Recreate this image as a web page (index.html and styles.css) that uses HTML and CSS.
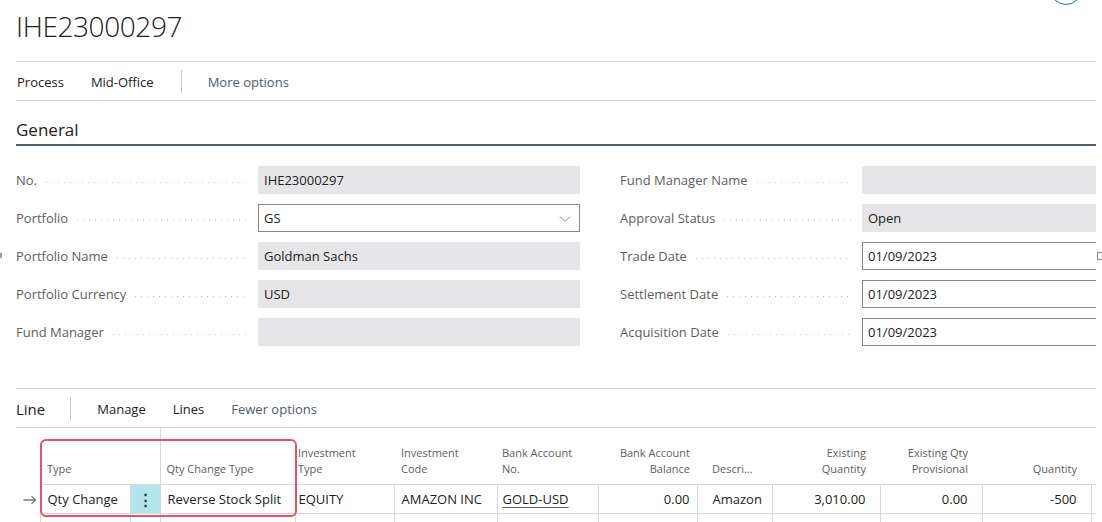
FILE: index.html
```html
<!DOCTYPE html>
<html>
<head>
<meta charset="utf-8">
<link rel="stylesheet" href="styles.css">
</head>
<body>
<div class="page">
  <div class="avatar"></div>
  <div class="edge-mark"></div>
  <div class="cal-icon"></div>
  <div class="content">
    <h1 class="title">IHE23000297</h1>
    <nav class="actionbar top-actions">
      <span class="act">Process</span>
      <span class="act">Mid-Office</span>
      <span class="sep"></span>
      <span class="act more">More options</span>
    </nav>

    <section class="general">
      <h2 class="section-title">General</h2>
      <div class="form">
        <div class="col">
          <div class="field"><div class="lbl"><span>No.</span><i class="dots"></i></div><div class="input ro">IHE23000297</div></div>
          <div class="field"><div class="lbl"><span>Portfolio</span><i class="dots"></i></div><div class="input edit select">GS<svg class="chev" width="12" height="8" viewBox="0 0 12 8"><path d="M1 1.5 L6 6.5 L11 1.5" fill="none" stroke="#8a8886" stroke-width="1"/></svg></div></div>
          <div class="field"><div class="lbl"><span>Portfolio Name</span><i class="dots"></i></div><div class="input ro">Goldman Sachs</div></div>
          <div class="field"><div class="lbl"><span>Portfolio Currency</span><i class="dots"></i></div><div class="input ro">USD</div></div>
          <div class="field"><div class="lbl"><span>Fund Manager</span><i class="dots"></i></div><div class="input ro"></div></div>
        </div>
        <div class="col">
          <div class="field"><div class="lbl"><span>Fund Manager Name</span><i class="dots"></i></div><div class="input ro"></div></div>
          <div class="field"><div class="lbl"><span>Approval Status</span><i class="dots"></i></div><div class="input ro">Open</div></div>
          <div class="field"><div class="lbl"><span>Trade Date</span><i class="dots"></i></div><div class="input edit">01/09/2023</div></div>
          <div class="field"><div class="lbl"><span>Settlement Date</span><i class="dots"></i></div><div class="input edit">01/09/2023</div></div>
          <div class="field"><div class="lbl"><span>Acquisition Date</span><i class="dots"></i></div><div class="input edit">01/09/2023</div></div>
        </div>
      </div>
    </section>

    <section class="lines">
      <nav class="actionbar line-actions">
        <span class="line-title">Line</span>
        <span class="sep"></span>
        <span class="act">Manage</span>
        <span class="act">Lines</span>
        <span class="act more">Fewer options</span>
      </nav>
      <div class="grid-wrap">
        <table class="grid">
          <colgroup>
            <col class="c-arrow"><col class="c-type"><col class="c-dots"><col class="c-qct"><col class="c-itype"><col class="c-icode"><col class="c-bank"><col class="c-bal"><col class="c-desc"><col class="c-exq"><col class="c-prov"><col class="c-qty"><col class="c-rest">
          </colgroup>
          <thead>
            <tr>
              <th class="h-arrow"></th>
              <th colspan="2">Type</th>
              <th class="freeze">Qty Change Type</th>
              <th class="tight">Investment<br>Type</th>
              <th>Investment<br>Code</th>
              <th class="bank">Bank Account<br>No.</th>
              <th class="num nb">Bank Account<br>Balance</th>
              <th class="desc">Descri...</th>
              <th class="num">Existing<br>Quantity</th>
              <th class="num">Existing Qty<br>Provisional</th>
              <th class="num">Quantity</th>
              <th></th>
            </tr>
          </thead>
          <tbody>
            <tr class="row">
              <td class="arrow"><svg width="14" height="10" viewBox="0 0 14 10"><path d="M0.5 5 H12.5 M8.5 1 L12.5 5 L8.5 9" fill="none" stroke="#333" stroke-width="1"/></svg></td>
              <td>Qty Change</td>
              <td class="dotscell">⋮</td>
              <td>Reverse Stock Split</td>
              <td class="tight">EQUITY</td>
              <td>AMAZON INC</td>
              <td class="bank"><span class="lookup">GOLD-USD</span></td>
              <td class="num nb">0.00</td>
              <td class="desc">Amazon</td>
              <td class="num">3,010.00</td>
              <td class="num">0.00</td>
              <td class="num">-500</td>
              <td></td>
            </tr>
            <tr class="row">
              <td class="arrow"></td>
              <td></td><td></td><td></td><td></td><td></td><td></td><td></td><td></td><td></td><td></td><td></td><td></td>
            </tr>
          </tbody>
        </table>
        <div class="highlight"></div>
      </div>
    </section>
  </div>
</div>
</body>
</html>
```

FILE: styles.css
```css
* { box-sizing: border-box; }
html, body { margin: 0; padding: 0; background: #fff; overflow: hidden; }
body {
  font-family: "Open Sans", "Segoe UI", sans-serif;
  font-size: 13px;
  color: #212121;
}
.page { position: relative; width: 1102px; height: 522px; overflow: hidden; }
.content { margin-left: 16px; width: 1080px; height: 522px; overflow: hidden; }

.avatar {
  position: absolute; left: 1050px; top: -27px;
  width: 32px; height: 32px; border-radius: 50%;
  border: 1.5px solid #00858a;
}
.edge-mark {
  position: absolute; left: 0; top: 253px; width: 2px; height: 5px; background: #9a9a9a;
}
.cal-icon {
  position: absolute; left: 1097px; top: 252px; width: 8px; height: 8px;
  border: 1px solid #8a8886;
}

.title {
  margin: 0; height: 61px; padding-top: 7px;
  font-size: 28px; font-weight: 300; line-height: 38px; color: #212121;
  letter-spacing: -0.4px;
}

.actionbar {
  display: flex; align-items: center;
  border-top: 1px solid #d8d8d8; border-bottom: 1px solid #d8d8d8;
}
.top-actions { height: 40px; padding-left: 1px; padding-top: 1px; }
.act { font-size: 13px; color: #212121; margin-right: 27px; white-space: nowrap; }
.act.more { color: #505c6d; }
.sep { width: 1px; height: 23px; background: #c8c8c8; margin-right: 26px; }

.section-title {
  margin: 0; height: 45px; padding-top: 17px;
  font-size: 17px; font-weight: 400; line-height: 24px; color: #212121;
  border-bottom: 2px solid #505c6d;
}

.form {
  display: grid; grid-template-columns: 564px 564px; column-gap: 40px;
  padding-top: 20px;
}
.col { display: flex; flex-direction: column; gap: 10px; }
.field { display: flex; height: 28px; align-items: center; }
.lbl {
  width: 242px; display: flex; align-items: center; height: 28px;
  color: #605e5c; font-size: 13px; white-space: nowrap;
}
.dots {
  flex: 1; height: 10px; margin: 0 10px 0 9px;
  background-image: linear-gradient(to right, #bcbcbc 1px, transparent 1px);
  background-size: 6px 1px; background-repeat: repeat-x; background-position: left 7px;
}
.input {
  width: 322px; height: 28px; line-height: 26px; padding-left: 6px;
  font-size: 13px; color: #212121; position: relative;
}
.input.ro { background: #e6e6e8; line-height: 28px; }
.input.edit { border: 1px solid #8a8886; padding-left: 5px; }
.chev { position: absolute; right: 8px; top: 10px; }

.lines { margin-top: 42px; }
.line-actions { height: 40px; padding-top: 1px; }
.line-title { font-size: 15px; color: #212121; margin-right: 25px; }
.line-actions .sep { height: 24px; }
.line-actions .act:first-of-type { margin-left: 0; }

.grid-wrap { position: relative; }
.grid {
  border-collapse: collapse; table-layout: fixed; width: 1175px;
}
.c-arrow { width: 24px; }
.c-type { width: 90px; }
.c-dots { width: 30px; }
.c-qct { width: 135px; }
.c-itype { width: 99px; }
.c-icode { width: 103px; }
.c-bank { width: 101px; }
.c-bal { width: 99px; }
.c-desc { width: 75px; }
.c-exq { width: 108px; }
.c-prov { width: 102px; }
.c-qty { width: 109px; }
.c-rest { width: 100px; }

.grid th {
  height: 56px; vertical-align: bottom; text-align: left;
  font-size: 11px; font-weight: 400; color: #605e5c; line-height: 16px;
  padding: 0 6px 7px 7px; white-space: nowrap; overflow: hidden;
}
.grid th.freeze { border-left: 1px solid #d8d8d8; padding-left: 6px; }
.grid th.tight, .grid td.tight { padding-left: 3px; }
.grid th.bank, .grid td.bank { padding-left: 5px; }
.grid th.num, .grid td.num { text-align: right; padding-right: 14px; }
.grid th.nb, .grid td.nb { padding-right: 7px; }
.grid th.desc, .grid td.desc { padding-left: 15px; }

.grid td {
  height: 29px; font-size: 13px; color: #212121;
  padding: 0 6px 0 7px; white-space: nowrap; overflow: hidden;
  border: 1px solid #d8d8d8;
}
.grid td.arrow { border: none; padding: 3px 0 0 7px; line-height: 0; }
.grid td.dotscell { background: #b3e5ea; text-align: center; padding: 0; font-size: 15px; font-weight: 700; color: #333; }
.lookup { text-decoration: underline; text-underline-offset: 3px; text-decoration-color: #666; }

.highlight {
  position: absolute; left: 24px; top: 11px; width: 257px; height: 78px;
  border: 2px solid #e3545f; border-radius: 6px; pointer-events: none;
}
```
